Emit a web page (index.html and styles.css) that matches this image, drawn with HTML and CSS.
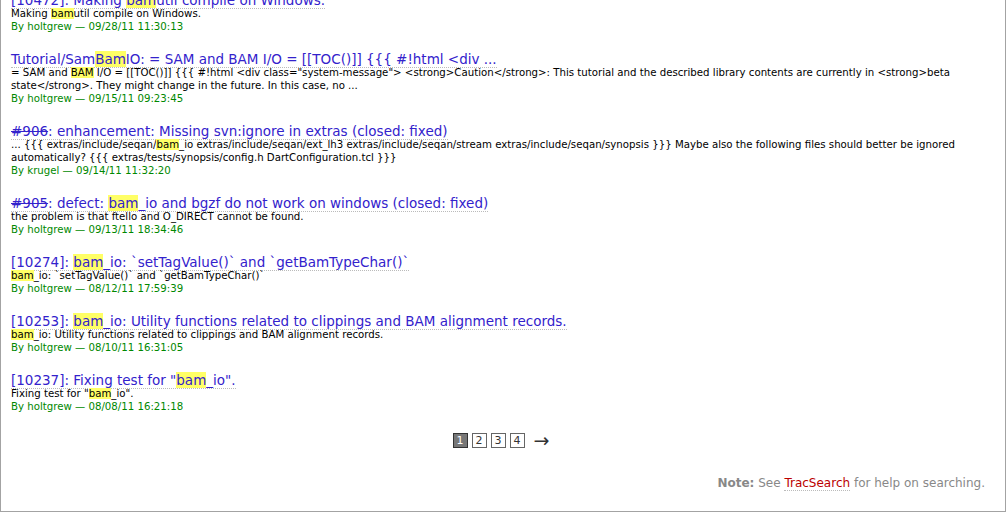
FILE: index.html
```html
<!DOCTYPE html>
<html>
<head>
<meta charset="utf-8">
<link rel="stylesheet" href="styles.css">
</head>
<body>
<div class="frame">
  <dl class="results">
    <dt><a class="title" href="#">[10472]: Making <span class="hl">bam</span>util compile on Windows.</a></dt>
    <dd class="excerpt">Making <span class="hl">bam</span>util compile on Windows.</dd>
    <dd class="meta">By holtgrew — 09/28/11 11:30:13</dd>

    <dt><a class="title" href="#">Tutorial/Sam<span class="hl">Bam</span>IO: = SAM and BAM I/O = [[TOC()]] {{{ #!html &lt;div ...</a></dt>
    <dd class="excerpt">= SAM and <span class="hl">BAM</span> I/O = [[TOC()]] {{{ #!html &lt;div class="system-message"&gt; &lt;strong&gt;Caution&lt;/strong&gt;: This tutorial and the described library contents are currently in &lt;strong&gt;beta<br>state&lt;/strong&gt;. They might change in the future. In this case, no ...</dd>
    <dd class="meta">By holtgrew — 09/15/11 09:23:45</dd>

    <dt><a class="title" href="#"><span class="closed">#906</span>: enhancement: Missing svn:ignore in extras (closed: fixed)</a></dt>
    <dd class="excerpt">... {{{ extras/include/seqan/<span class="hl">bam</span>_io extras/include/seqan/ext_lh3 extras/include/seqan/stream extras/include/seqan/synopsis }}} Maybe also the following files should better be ignored<br>automatically? {{{ extras/tests/synopsis/config.h DartConfiguration.tcl }}}</dd>
    <dd class="meta">By krugel — 09/14/11 11:32:20</dd>

    <dt><a class="title" href="#"><span class="closed">#905</span>: defect: <span class="hl">bam</span>_io and bgzf do not work on windows (closed: fixed)</a></dt>
    <dd class="excerpt">the problem is that ftello and O_DIRECT cannot be found.</dd>
    <dd class="meta">By holtgrew — 09/13/11 18:34:46</dd>

    <dt><a class="title" href="#">[10274]: <span class="hl">bam</span>_io: `setTagValue()` and `getBamTypeChar()`</a></dt>
    <dd class="excerpt"><span class="hl">bam</span>_io: `setTagValue()` and `getBamTypeChar()`</dd>
    <dd class="meta">By holtgrew — 08/12/11 17:59:39</dd>

    <dt><a class="title" href="#">[10253]: <span class="hl">bam</span>_io: Utility functions related to clippings and BAM alignment records.</a></dt>
    <dd class="excerpt"><span class="hl">bam</span>_io: Utility functions related to clippings and BAM alignment records.</dd>
    <dd class="meta">By holtgrew — 08/10/11 16:31:05</dd>

    <dt><a class="title" href="#">[10237]: Fixing test for "<span class="hl">bam</span>_io".</a></dt>
    <dd class="excerpt">Fixing test for "<span class="hl">bam</span>_io".</dd>
    <dd class="meta">By holtgrew — 08/08/11 16:21:18</dd>
  </dl>

  <div class="paging">
    <span class="page current">1</span>
    <a class="page" href="#">2</a>
    <a class="page" href="#">3</a>
    <a class="page" href="#">4</a>
    <a class="next" href="#">→</a>
  </div>

  <p class="note"><strong>Note:</strong> See <a href="#">TracSearch</a> for help on searching.</p>
</div>
</body>
</html>
```

FILE: styles.css
```css
html, body {
  margin: 0;
  padding: 0;
  background: #fff;
}

body {
  font-family: "DejaVu Sans", Verdana, sans-serif;
  color: #000;
}

.frame {
  box-sizing: border-box;
  width: 1006px;
  height: 512px;
  border: 1px solid #a3a3a3;
  border-top: none;
  overflow: hidden;
  padding: 0 20px 0 10px;
  display: flex;
  flex-direction: column;
}

.results {
  margin: -7px 0 0 0;
  padding: 0;
}

.results dt {
  margin: 0;
  font-size: 13.5px;
  line-height: 14px;
  height: 14px;
  white-space: nowrap;
}

.title {
  color: #3322cc;
  text-decoration: none;
  border-bottom: 1px dotted #bbb;
}

.closed {
  text-decoration: line-through;
}

.hl {
  background: #ffff66;
}

.results dd {
  margin: 0;
  font-size: 10.2px;
  line-height: 13px;
}

.results dd.meta {
  color: #008800;
  margin-bottom: 19px;
}

.paging {
  display: flex;
  justify-content: center;
  align-items: center;
  gap: 4px;
  margin-top: 1px;
  padding-left: 6px;
  font-size: 11px;
  line-height: 13px;
}

.page {
  box-sizing: border-box;
  display: inline-block;
  width: 15px;
  text-align: center;
  border: 1px solid #666;
  line-height: 13px;
  color: #333;
  text-decoration: none;
}

.page.current {
  background: #777;
  border-color: #333;
  color: #fff;
}

.next {
  margin-left: 5px;
  color: #333;
  text-decoration: none;
  font-size: 19px;
  line-height: 13px;
}

.note {
  margin: 28px 0 0 0;
  text-align: right;
  font-size: 12px;
  color: #888;
}

.note strong {
  color: #888;
}

.note a {
  color: #b00;
  text-decoration: none;
  border-bottom: 1px dotted #bbb;
}
```
